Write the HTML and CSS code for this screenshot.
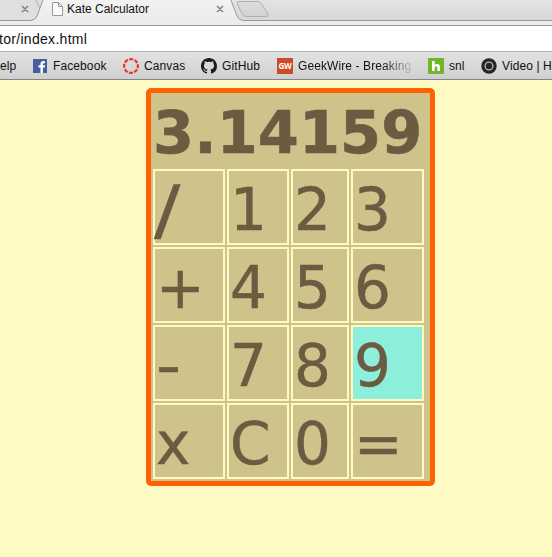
FILE: index.html
```html
<!DOCTYPE html>
<html lang="en">
<head>
<meta charset="utf-8">
<title>Kate Calculator</title>
<link rel="stylesheet" href="styles.css">
</head>
<body>
<header class="browser">
  <div class="tabs">
    <svg class="tab-shapes" width="552" height="25" viewBox="0 0 552 25">
      <defs>
        <linearGradient id="active" x1="0" y1="0" x2="0" y2="1"><stop offset="0" stop-color="#f2f2f2"/><stop offset="1" stop-color="#ebebeb"/></linearGradient>
        <linearGradient id="idle" x1="0" y1="0" x2="0" y2="1"><stop offset="0" stop-color="#dedede"/><stop offset="1" stop-color="#d2d2d2"/></linearGradient>
      </defs>
      <path d="M0 0H42L36 16Q34 20.500 30 20.500H0Z" fill="#dfdfdf"/>
      <path d="M36 0L40 9" stroke="#aaa" fill="none"/>
      <path d="M0 20.500H31Q35 20 37 16L43 0H231L237 16Q239 20.500 244 20.500H552V25H0Z" fill="url(#active)"/>
      <path d="M0 20.500H31Q35 20 37 16L43 0M231 0L237 16Q239 20.500 244 20.500H552" stroke="#999" fill="none"/>
      <path d="M239 1.500H258Q260.500 1.500 261.500 4L267.500 13Q269 16.500 266 16.500H246Q243 16.500 242 14L237.500 4Q236.500 1.500 239 1.500Z" fill="url(#idle)" stroke="#b0b0b0"/>
      <path d="M22 6L28 12M28 6L22 12M217 6L223 12M223 6L217 12" stroke="#808080" stroke-width="1.500"/>
      <path d="M52.500 2.500H58.500L62.500 6.500V15.500H52.500ZM58.500 2.500V6.500H62.500" fill="#fafafa" stroke="#999"/>
    </svg>
    <span class="tab-title">Kate Calculator</span>
  </div>
  <div class="address">tor/index.html</div>
  <nav class="bookmarks">
    <span class="mark help">elp</span>
    <span class="mark facebook"><svg width="14" height="14" viewBox="0 0 14 14"><path fill="#4460a0" d="M0 0H14V14H0Z"/><path fill="#fff" d="M7.500 14V8.500H5.500V6.300H7.500V4.800Q7.500 2 10.300 2H12V4.200H10.800Q9.900 4.200 9.900 5.200V6.300H12L11.700 8.500H9.900V14Z"/></svg>Facebook</span>
    <span class="mark canvas"><svg width="16" height="16" viewBox="0 0 16 16"><circle cx="8" cy="8" r="6.900" fill="none" stroke="#e8392b" stroke-width="2.200" stroke-dasharray="4 1.419" stroke-dashoffset="2"/></svg>Canvas</span>
    <span class="mark github"><svg width="16" height="16" viewBox="0 0 16 16"><path fill="#1b1b1b" d="M8 0C3.580 0 0 3.580 0 8c0 3.540 2.290 6.530 5.470 7.590.4.070.55-.17.55-.38v-1.490c-2.010.37-2.530-.49-2.690-.94-.09-.23-.48-.94-.82-1.130-.28-.15-.68-.52-.01-.53.63-.01 1.080.58 1.230.82.72 1.210 1.870.87 2.330.66.070-.52.28-.87.510-1.070-1.780-.2-3.640-.89-3.640-3.950 0-.87.310-1.590.82-2.150-.08-.2-.36-1.020.080-2.120 0 0 .67-.21 2.200.82A7.600 7.600 0 0 1 8 3.860c.68 0 1.360.09 2 .27 1.530-1.040 2.200-.82 2.200-.82.44 1.100.16 1.920.080 2.120.51.56.82 1.270.82 2.150 0 3.070-1.870 3.750-3.650 3.950.29.25.54.73.54 1.480v2.200c0 .21.150.46.550.38A8 8 0 0 0 16 8c0-4.420-3.580-8-8-8Z"/></svg>GitHub</span>
    <span class="mark geekwire"><b class="gw">GW</b><span class="fade">GeekWire - Breaking</span></span>
    <span class="mark snl"><svg width="16" height="16" viewBox="0 0 16 16"><path fill="#73b52c" d="M0 0H16V16H0Z"/><path fill="#fff" d="M4 3H6.700V6.800Q7.600 6 9 6Q12 6 12 9V13H9.300V9.700Q9.300 8.300 8 8.300Q6.700 8.300 6.700 9.800V13H4Z"/></svg>snl</span>
    <span class="mark video"><svg width="16" height="16" viewBox="0 0 16 16"><circle cx="8" cy="8" r="7.700" fill="#262324"/><circle cx="8" cy="8" r="3.900" fill="none" stroke="#bbb" stroke-width="1.300"/></svg>Video | H</span>
  </nav>
</header>
<main class="calculator">
  <div class="display">3.14159</div>
  <div class="keys">
    <div class="key"><span class="slash">/</span></div><div class="key">1</div><div class="key">2</div><div class="key">3</div>
    <div class="key">+</div><div class="key">4</div><div class="key">5</div><div class="key">6</div>
    <div class="key"><span class="minus">-</span></div><div class="key">7</div><div class="key">8</div><div class="key active">9</div>
    <div class="key">x</div><div class="key">C</div><div class="key">0</div><div class="key">=</div>
  </div>
</main>
</body>
</html>
```
FILE: styles.css
```css
* { box-sizing: border-box; }
body {
  margin: 0;
  height: 557px;
  overflow: hidden;
  background: #fff9c4;
  font-family: "Liberation Sans", Arial, sans-serif;
}
.browser { height: 80px; color: #111; }
.tabs {
  position: relative;
  height: 26px;
  background: linear-gradient(#e4e4e4, #d6d6d6 20px);
  border-bottom: 1px solid #999;
}
.tab-shapes { display: block; }
.tab-title {
  position: absolute;
  left: 67px;
  top: 1px;
  font-size: 12px;
  line-height: 16px;
}
.address {
  height: 25px;
  background: #fff;
  font-size: 14px;
  line-height: 26px;
  letter-spacing: 0.3px;
  margin-left: -1px;
}
.bookmarks {
  display: flex;
  height: 29px;
  border-top: 1px solid #b5b5b5;
  border-bottom: 1px solid #858585;
  background: linear-gradient(#e2e2e2, #d0d0d0);
  font-size: 12px;
  letter-spacing: 0.1px;
}
.mark {
  display: flex;
  align-items: center;
  flex: none;
  gap: 5px;
  white-space: nowrap;
  padding-top: 1px;
}
.help { width: 33px; }
.facebook { width: 90px; gap: 6px; }
.canvas { width: 78px; }
.github { width: 76px; }
.geekwire { width: 151px; }
.snl { width: 53px; }
.gw {
  width: 16px;
  height: 16px;
  background: #cb4b27;
  color: #fff;
  font: bold 8px/16px "Open Sans", sans-serif;
  letter-spacing: -0.3px;
  text-align: center;
}
.fade {
  width: 118px;
  mask-image: linear-gradient(90deg, #000 84px, transparent 118px);
}
.calculator {
  width: 289px;
  height: 398px;
  margin: 8px 0 0 146px;
  padding: 0 2px 2px;
  border: 5px solid #ff6000;
  border-radius: 5px;
  background: #cfc38c;
  color: #6b5b41;
  font-family: "DejaVu Sans", Verdana, sans-serif;
  font-size: 58px;
}
.display {
  height: 76px;
  line-height: 80px;
  font-size: 59px;
  font-weight: bold;
  letter-spacing: 0.1px;
  -webkit-text-stroke: 0.6px #6b5b41;
}
.keys {
  display: grid;
  grid-template-columns: 72px 62px 58px 73px;
  grid-auto-rows: 76px;
  gap: 2px;
}
.key {
  border: 2px solid #fff9c4;
  padding-left: 1px;
  line-height: 78px;
  letter-spacing: -0.5px;
  -webkit-text-stroke: 0.5px #6b5b41;
}
.slash {
  display: block;
  font-size: 65px;
  line-height: 80px;
  margin-left: -2px;
  transform: scaleX(1.2);
  transform-origin: 0 0;
}
.minus {
  display: block;
  transform: scaleX(1.2);
  transform-origin: 0 0;
}
.active { background: #8ceedb; }
```
